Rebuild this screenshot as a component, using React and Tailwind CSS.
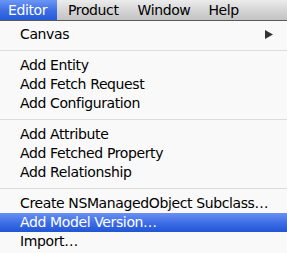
import React from "react";

const font = { fontFamily: '"Lucida Grande", "DejaVu Sans", "Liberation Sans", sans-serif' };

function Row({ children, active, arrow }) {
  return (
    <div
      className={
        "h-[19px] flex items-center pl-[20px] pr-[14px] text-[14px] leading-[19px] tracking-[-0.38px] " +
        (active
          ? "text-white bg-gradient-to-b from-[#6a90f2] via-[#3f6ee6] to-[#1f55d6]"
          : "text-black")
      }
    >
      <span className="flex-1 whitespace-nowrap">{children}</span>
      {arrow && (
        <svg width="8" height="9" viewBox="0 0 8 9">
          <path d="M0 0 L8 4.5 L0 9 Z" fill="#333" />
        </svg>
      )}
    </div>
  );
}

function Sep() {
  return (
    <div className="h-[12px] flex items-center">
      <div className="h-px w-full bg-[#dcdcdc]" />
    </div>
  );
}

export default function App() {
  return (
    <div className="w-[287px] h-[253px] overflow-hidden bg-[#f9f9f9]" style={font}>
      <div className="h-[21px] flex items-stretch border-b border-[#5a5a5a] bg-gradient-to-b from-[#ececec] via-[#d6d6d6] to-[#c2c2c2] text-[14px] tracking-[-0.38px] text-black">
        <div className="w-[57px] pl-[8px] flex items-center text-white bg-gradient-to-b from-[#6d96f5] via-[#3f6fe4] to-[#245ad9]">
          Editor
        </div>
        <div className="pl-[11px] flex items-center">Product</div>
        <div className="pl-[19px] flex items-center">Window</div>
        <div className="pl-[18px] flex items-center">Help</div>
      </div>
      <div className="pt-[4px]">
        <Row arrow>Canvas</Row>
        <Sep />
        <Row>Add Entity</Row>
        <Row>Add Fetch Request</Row>
        <Row>Add Configuration</Row>
        <Sep />
        <Row>Add Attribute</Row>
        <Row>Add Fetched Property</Row>
        <Row>Add Relationship</Row>
        <Sep />
        <Row>Create NSManagedObject Subclass…</Row>
        <Row active>Add Model Version…</Row>
        <Row>Import…</Row>
      </div>
    </div>
  );
}
